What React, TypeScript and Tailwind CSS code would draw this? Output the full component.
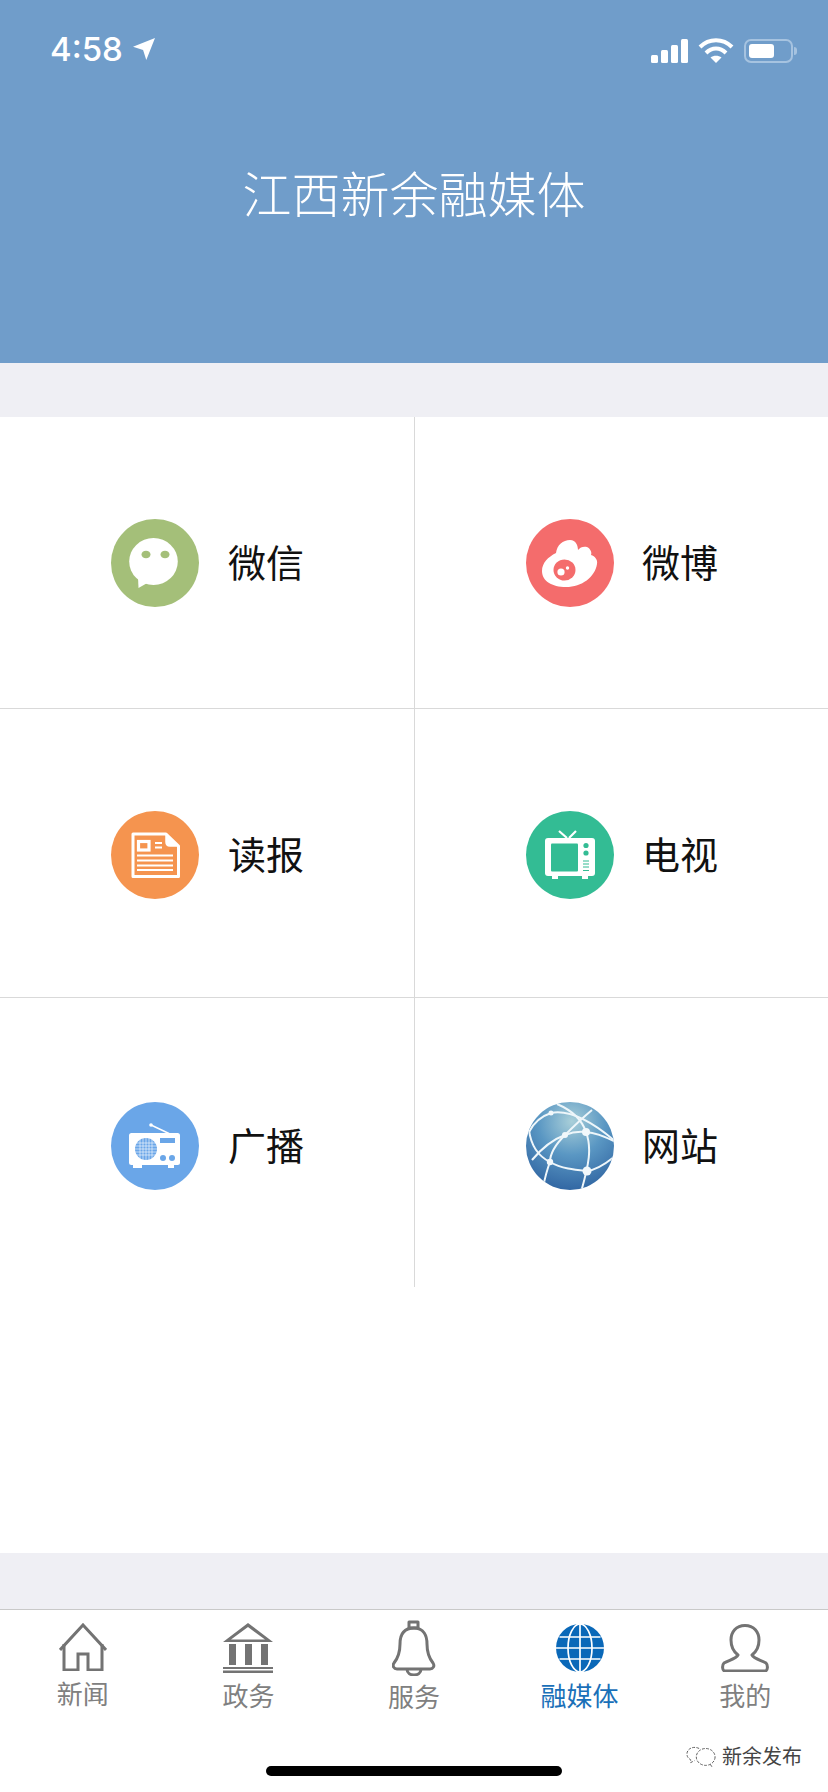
const CJK = { fontFamily: '"Noto Sans CJK SC", "Noto Sans", sans-serif' };

function Wechat() {
  return (
    <svg viewBox="0 0 88 88" className="h-[88px] w-[88px] shrink-0">
      <circle cx="44" cy="44" r="44" fill="#a4bf79" />
      <ellipse cx="42.5" cy="42.5" rx="24.3" ry="23.5" fill="#fff" />
      <path d="M27 58 L27.5 69 L38 63 Z" fill="#fff" />
      <ellipse cx="35" cy="35.5" rx="4.5" ry="3.8" fill="#a4bf79" />
      <ellipse cx="54" cy="35.5" rx="4.5" ry="3.8" fill="#a4bf79" />
    </svg>
  );
}

function Weibo() {
  return (
    <svg viewBox="0 0 88 88" className="h-[88px] w-[88px] shrink-0">
      <circle cx="44" cy="44" r="44" fill="#f46c6c" />
      <path
        d="M16 52 C16 44 22 38 30 34 C31 26 37 21 44 21 C50 21 52 27 52 31 C54 28 58 27 61 28 C65 30 66 34 65 36 C69 37 72 41 71 45 C69 58 56 68 40 68 C26 68 16 62 16 52 Z"
        fill="#fff"
      />
      <ellipse cx="38.5" cy="51" rx="11" ry="10.5" fill="#f46c6c" />
      <circle cx="35" cy="53" r="3.6" fill="#fff" />
      <circle cx="41.5" cy="49" r="1.7" fill="#fff" />
    </svg>
  );
}

function Paper() {
  return (
    <svg viewBox="0 0 88 88" className="h-[88px] w-[88px] shrink-0">
      <circle cx="44" cy="44" r="44" fill="#f5944f" />
      <path d="M22 23 H55 L67.5 35 V65.5 H22 Z" fill="none" stroke="#fff" strokeWidth="3" strokeLinejoin="round" />
      <path d="M55 23 V31 Q55 35 59 35 H67.5" fill="#fff" stroke="#fff" strokeWidth="1.5" />
      <rect x="27.5" y="30.5" width="10.5" height="8.5" fill="none" stroke="#fff" strokeWidth="3.2" />
      <path d="M44 32 H51 M44 36.5 H51 M26 44.5 H62 M26 49.5 H62 M26 54.5 H62 M26 59 H62" stroke="#fff" strokeWidth="2" />
    </svg>
  );
}

function Tv() {
  return (
    <svg viewBox="0 0 88 88" className="h-[88px] w-[88px] shrink-0">
      <circle cx="44" cy="44" r="44" fill="#33bc94" />
      <path d="M33 20 L41 27 M50 20 L43 27" stroke="#fff" strokeWidth="2.2" />
      <rect x="19" y="27" width="50" height="38" rx="3" fill="#fff" />
      <rect x="25" y="32.5" width="27" height="28" rx="1" fill="#33bc94" />
      <circle cx="60" cy="34.5" r="2.6" fill="#33bc94" />
      <circle cx="60" cy="42" r="2.6" fill="#33bc94" />
      <path d="M57 50 H63 M57 53 H63 M57 56 H63 M57 59.5 H63" stroke="#33bc94" strokeWidth="1.2" />
      <rect x="26" y="65" width="6" height="3" fill="#fff" />
      <rect x="56" y="65" width="6" height="3" fill="#fff" />
    </svg>
  );
}

function Radio() {
  return (
    <svg viewBox="0 0 88 88" className="h-[88px] w-[88px] shrink-0">
      <circle cx="44" cy="44" r="44" fill="#6aa6e8" />
      <path d="M40 23 L58 31.5" stroke="#fff" strokeWidth="1.4" />
      <circle cx="40" cy="23" r="1.8" fill="#fff" />
      <rect x="18" y="31" width="51" height="32" rx="2.5" fill="#fff" />
      <rect x="22" y="62" width="9" height="4" fill="#fff" />
      <rect x="57" y="62" width="6" height="4" fill="#fff" />
      <circle cx="35" cy="47" r="11" fill="#6aa6e8" />
      <path
        d="M24 41 H46 M24 44 H46 M24 47 H46 M24 50 H46 M24 53 H46 M29 36 V58 M32 36 V58 M35 36 V58 M38 36 V58 M41 36 V58"
        stroke="#fff"
        strokeWidth="0.6"
      />
      <rect x="49" y="36" width="15" height="5" fill="#6aa6e8" />
      <circle cx="52" cy="56" r="3" fill="#6aa6e8" />
      <circle cx="61" cy="56" r="3" fill="#6aa6e8" />
    </svg>
  );
}

function Earth() {
  return (
    <svg viewBox="0 0 88 88" className="h-[88px] w-[88px] shrink-0">
      <defs>
        <radialGradient id="earth" cx="0.52" cy="0.22" r="0.85">
          <stop offset="0" stopColor="#a9cfd9" />
          <stop offset="0.45" stopColor="#5a97c3" />
          <stop offset="1" stopColor="#2b5f9e" />
        </radialGradient>
        <clipPath id="earthClip">
          <circle cx="44" cy="44" r="44" />
        </clipPath>
      </defs>
      <circle cx="44" cy="44" r="44" fill="url(#earth)" />
      <g clipPath="url(#earthClip)" fill="none" stroke="#eef6fa" strokeWidth="2">
        <path d="M3 30 C8 20 16 14 25 11 C40 8 62 16 90 40" />
        <path d="M31 2 C45 8 56 18 60 30 C66 46 63 62 55 90" />
        <path d="M3 28 C5 44 12 54 24 60 C36 67 50 68 61 69 C70 68 78 63 88 55" />
        <path d="M66 8 C54 18 46 26 39 33 C30 42 24 52 24 60 C20 70 18 80 16 90" />
        <path d="M6 58 C16 46 28 37 39 33 C46 30 52 29 60 30 C70 31 80 35 90 40" />
      </g>
      <g fill="#f2f8fb">
        <circle cx="25" cy="11" r="2.5" />
        <circle cx="39" cy="33" r="3" />
        <circle cx="60" cy="30" r="4" />
        <circle cx="24" cy="60" r="3.2" />
        <circle cx="61" cy="69" r="4.5" />
      </g>
    </svg>
  );
}

function HomeIcon() {
  return (
    <svg viewBox="0 0 48 48" className="h-[48px] w-[48px]" fill="none" stroke="#737373" strokeWidth="3">
      <path d="M1 27 L24 2 L47 27" strokeLinejoin="miter" />
      <path d="M6 21 V47 H20 V31 H30 V47 H44 V21" strokeLinejoin="miter" transform="translate(-1 0)" />
    </svg>
  );
}

function BankIcon() {
  return (
    <svg viewBox="0 0 50 50" className="h-[50px] w-[50px]" fill="#737373">
      <path d="M25 0 L50 19 H0 Z M25 4 L8 16.5 H42 Z" fillRule="evenodd" />
      <rect x="6" y="21" width="7" height="21" />
      <rect x="22" y="21" width="7" height="21" />
      <rect x="38" y="21" width="7" height="21" />
      <rect x="0" y="44" width="50" height="2" />
      <rect x="0" y="47.5" width="50" height="2.5" />
    </svg>
  );
}

function BellIcon() {
  return (
    <svg viewBox="0 0 44 56" className="h-[56px] w-[44px]" fill="none" stroke="#737373" strokeWidth="3" strokeLinejoin="round">
      <path d="M17 2 H26 V8 H17 Z" />
      <path d="M22 8 C11 8 8 16 8 24 C8 33 6 38 2 43 C0 46 2 49 5 49 H38 C41 49 43 46 41 43 C37 38 35 33 35 24 C35 16 32 8 22 8 Z" />
      <path d="M15 49 C15 57 29 57 29 49" />
    </svg>
  );
}

function GlobeIcon() {
  return (
    <svg viewBox="0 0 48 48" className="h-[48px] w-[48px]">
      <circle cx="24" cy="24" r="24" fill="#0a68b8" />
      <g fill="none" stroke="#fff" strokeWidth="1.7">
        <path d="M24 0 V48" />
        <ellipse cx="24" cy="24" rx="12" ry="24" />
        <path d="M0 24 H48 M3.5 13 H44.5 M3.5 35 H44.5" />
      </g>
    </svg>
  );
}

function UserIcon() {
  return (
    <svg viewBox="0 0 48 48" className="h-[48px] w-[48px]" fill="none" stroke="#737373" strokeWidth="3" strokeLinejoin="round">
      <path d="M24 1.5 C15 1.5 10 8 10 16 C10 23 13 28 17 31 C15 35 8 36 3 39 C1 41 1 47 4 47 H44 C47 47 47 41 45 39 C40 36 33 35 31 31 C35 28 38 23 38 16 C38 8 33 1.5 24 1.5 Z" />
    </svg>
  );
}

const cells = [
  { label: "微信", icon: <Wechat />, cls: "h-[292px] pl-[111px] pt-[1px] gap-[29px] border-b border-r" },
  { label: "微博", icon: <Weibo />, cls: "h-[292px] pl-[111px] pt-[1px] gap-[28px] border-b" },
  { label: "读报", icon: <Paper />, cls: "h-[289px] pl-[111px] pt-[4px] gap-[29px] border-b border-r" },
  { label: "电视", icon: <Tv />, cls: "h-[289px] pl-[111px] pt-[4px] gap-[28px] border-b" },
  { label: "广播", icon: <Radio />, cls: "h-[289px] pl-[111px] pt-[6px] gap-[29px] border-r" },
  { label: "网站", icon: <Earth />, cls: "h-[289px] pl-[111px] pt-[6px] gap-[28px]" },
];

const tabs = [
  { label: "新闻", icon: <HomeIcon />, cls: "pt-[13px] gap-[8px] text-[#808080]" },
  { label: "政务", icon: <BankIcon />, cls: "pt-[13px] gap-[8px] text-[#808080]" },
  { label: "服务", icon: <BellIcon />, cls: "pt-[10px] gap-[6px] text-[#808080]" },
  { label: "融媒体", icon: <GlobeIcon />, cls: "pt-[14px] gap-[9px] text-[#1a70b8]" },
  { label: "我的", icon: <UserIcon />, cls: "pt-[14px] gap-[9px] text-[#808080]" },
];

export default function App() {
  return (
    <div className="relative flex h-[1792px] w-[828px] flex-col overflow-hidden bg-[#efeff4]" style={CJK}>
      <header className="flex h-[363px] shrink-0 flex-col bg-[#709dca] text-white">
        <div className="flex h-[100px] items-start justify-between pl-[50px] pr-[31px] pt-[30px]">
          <div className="flex items-center gap-[10px]">
            <span className="text-[33px] leading-[38px] font-medium" style={{ fontFamily: 'Inter, sans-serif' }}>
              4:58
            </span>
            <svg viewBox="0 0 24 24" className="h-[22px] w-[22px]" fill="#fff">
              <path d="M24 0 L14.5 24 L11 13 L0 9.5 Z" />
            </svg>
          </div>
          <div className="flex items-center gap-[10px] pt-[8px]">
            <svg viewBox="0 0 37 24" className="h-[24px] w-[37px]" fill="#fff">
              <rect x="0" y="16" width="7" height="8" rx="1.5" />
              <rect x="10" y="11" width="7" height="13" rx="1.5" />
              <rect x="20" y="6" width="7" height="18" rx="1.5" />
              <rect x="30" y="0" width="7" height="24" rx="1.5" />
            </svg>
            <svg viewBox="0 0 36 26" className="h-[26px] w-[36px]" fill="none" stroke="#fff" strokeWidth="4">
              <path d="M2 9 C11 0 25 0 34 9" />
              <path d="M8 15 C14 9 22 9 28 15" />
              <path d="M18 25 L12.5 19.5 C15.5 17 20.5 17 23.5 19.5 Z" fill="#fff" stroke="none" />
            </svg>
            <div className="flex items-center gap-[1px]">
              <div className="flex h-[24px] w-[49px] items-center rounded-[7px] border-2 border-[#a6c3e0] px-[3px]">
                <div className="h-[14px] w-[25px] rounded-[3px] bg-white" />
              </div>
              <div className="h-[8px] w-[3px] rounded-r-sm bg-[#a6c3e0]" />
            </div>
          </div>
        </div>
        <h1 className="pt-[62px] text-center text-[49px] leading-[60px] font-light">江西新余融媒体</h1>
      </header>

      <div className="h-[54px] shrink-0" />

      <main className="grid h-[1136px] shrink-0 grid-cols-[415px_413px] content-start bg-white">
        {cells.map((c) => (
          <div key={c.label} className={`flex items-center border-[#d9d9d9] ${c.cls}`}>
            {c.icon}
            <span className="-mt-[4px] text-[38px] leading-[50px] text-[#111]">{c.label}</span>
          </div>
        ))}
      </main>

      <div className="h-[56px] shrink-0" />

      <nav className="flex min-h-0 flex-1 border-t border-[#c9c9c9] bg-white">
        {tabs.map((t) => (
          <div key={t.label} className={`flex flex-1 flex-col items-center ${t.cls}`}>
            {t.icon}
            <span className="text-[26px] leading-[28px]">{t.label}</span>
          </div>
        ))}
      </nav>

      <div className="absolute left-[266px] top-[1766px] h-[10px] w-[296px] rounded-full bg-black" />

      <div className="absolute left-[686px] top-[1744px] flex items-center gap-[6px] text-[#444]">
        <svg viewBox="0 0 32 24" className="h-[24px] w-[30px]" fill="none" stroke="#555" strokeWidth="1" strokeDasharray="3 1.5">
          <path d="M14 4 C8 1 1 4 1 10 C1 13 3 15 5 16 L5 19 L9 17" />
          <ellipse cx="21" cy="13" rx="10" ry="9" />
          <path d="M26 21 L28 24" />
        </svg>
        <span className="text-[20px] leading-[24px]">新余发布</span>
      </div>
    </div>
  );
}
